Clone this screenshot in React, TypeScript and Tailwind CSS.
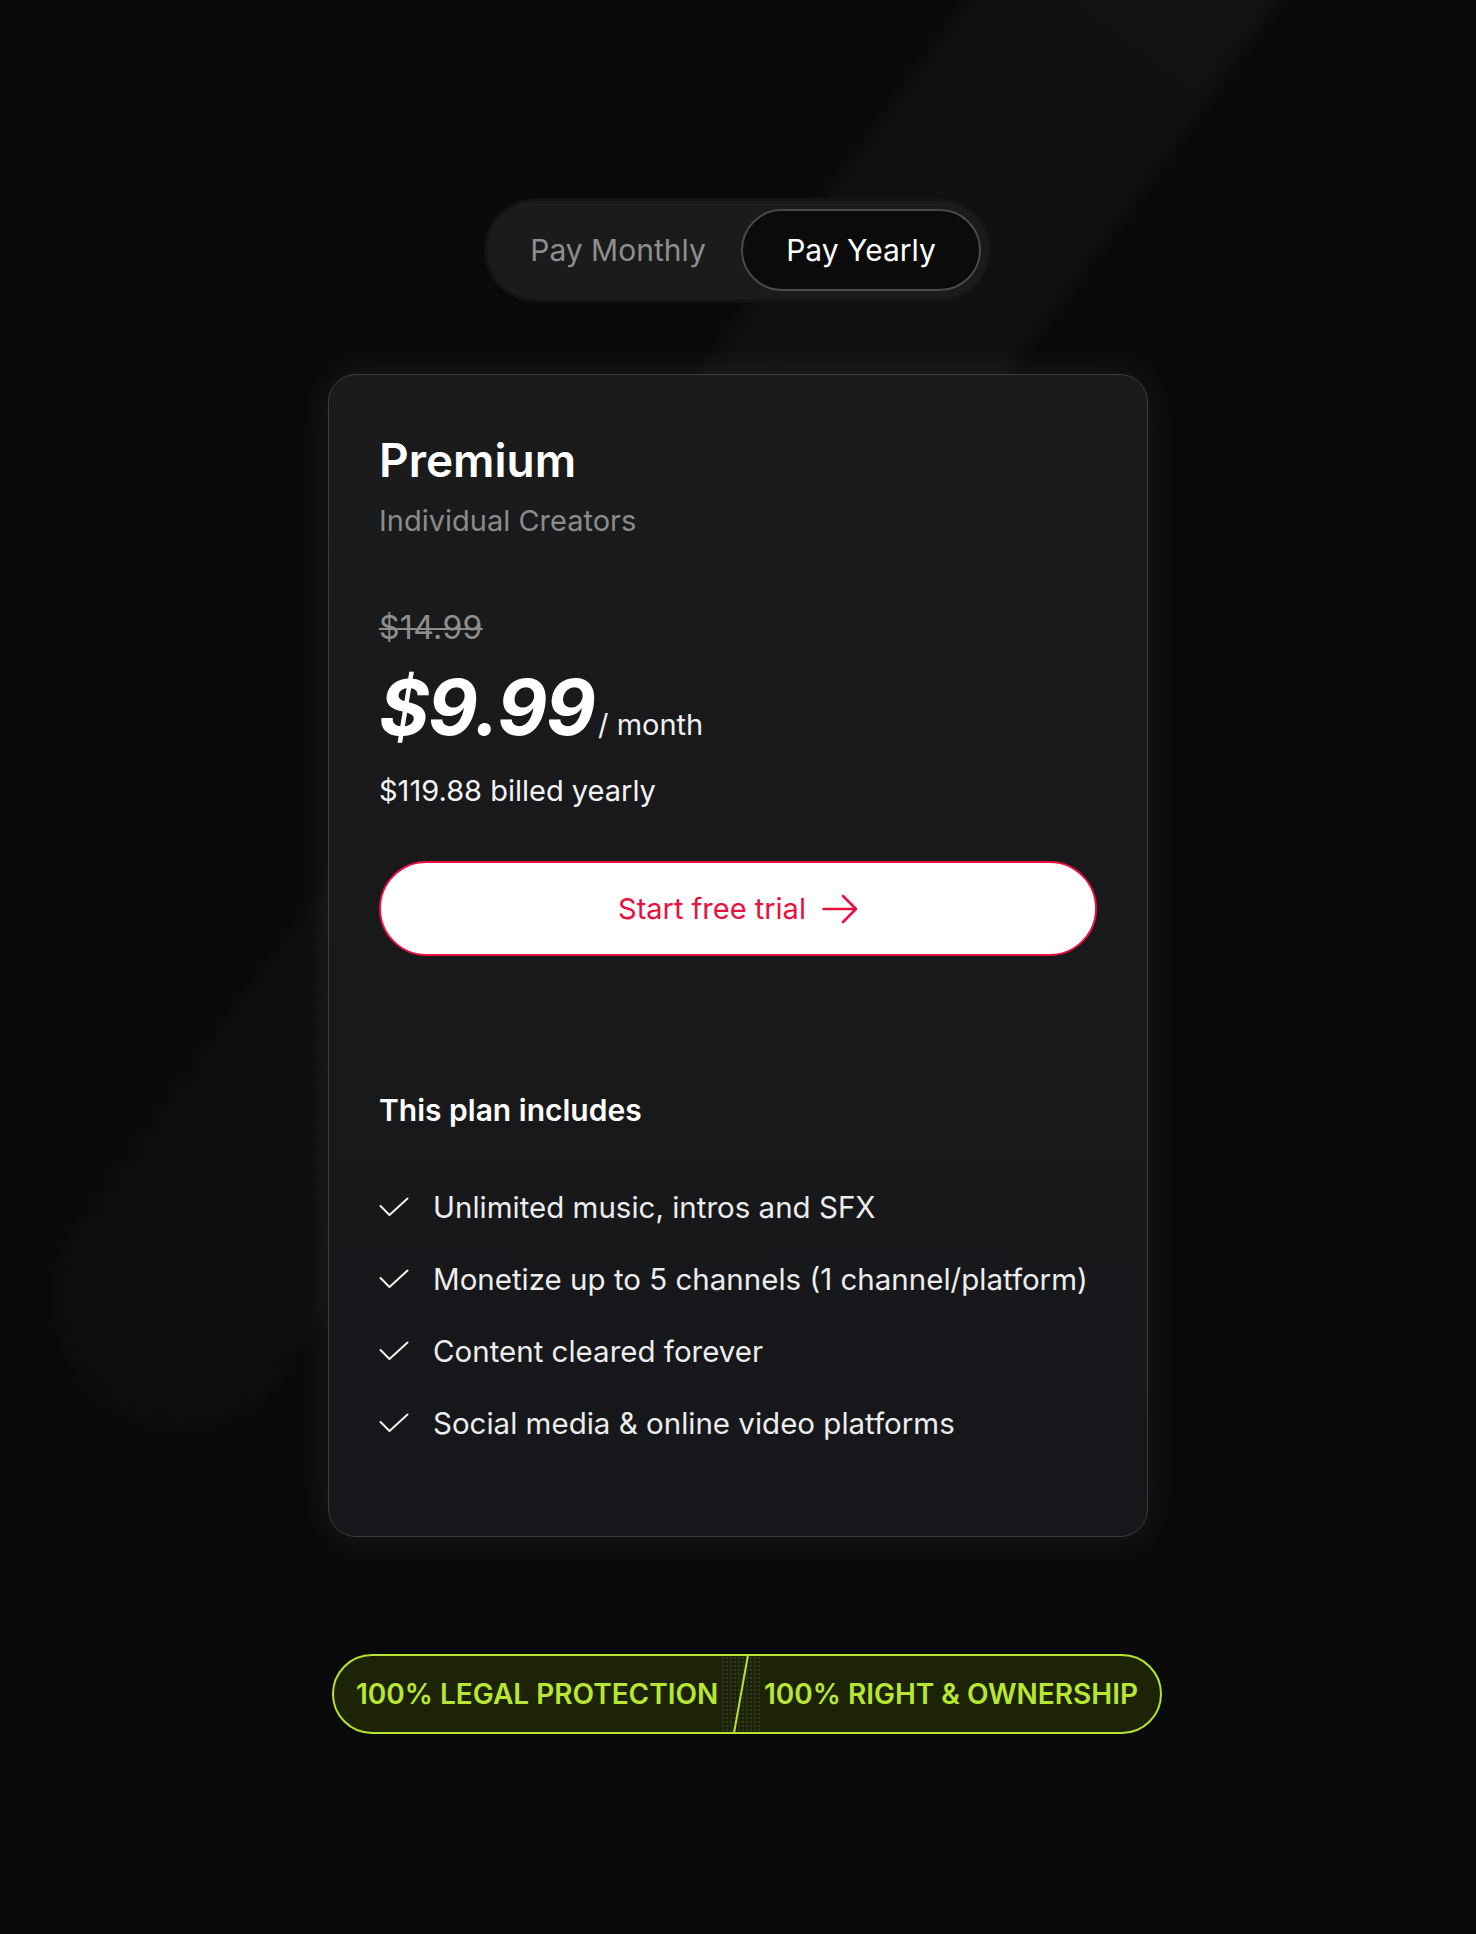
import { useState } from "react";

const FEATURES = [
  "Unlimited music, intros and SFX",
  "Monetize up to 5 channels (1 channel/platform)",
  "Content cleared forever",
  "Social media & online video platforms",
];

function CheckIcon() {
  return (
    <svg width="30" height="20" viewBox="0 0 30 20" fill="none" className="shrink-0">
      <path
        d="M1.5 9L10.5 18L28.5 1.5"
        stroke="#f2f2f2"
        strokeWidth="2"
        strokeLinecap="round"
        strokeLinejoin="round"
      />
    </svg>
  );
}

function ArrowIcon() {
  return (
    <svg width="36" height="30" viewBox="0 0 36 30" fill="none" className="shrink-0">
      <path
        d="M1.5 15H34M21 2L34 15L21 28"
        stroke="#e8103e"
        strokeWidth="2.6"
        strokeLinecap="round"
        strokeLinejoin="round"
      />
    </svg>
  );
}

export default function App() {
  const [yearly, setYearly] = useState(true);

  return (
    <div className="relative min-h-[1934px] w-full overflow-hidden bg-[#0a0a0a] font-['Inter',sans-serif]">
      {/* diagonal streak in the background */}
      <div className="pointer-events-none absolute left-[600px] top-[-500px] h-[2100px] w-[250px] rotate-[36deg] rounded-full bg-linear-to-b from-[#131313] via-[#0f0f0f] to-[#0e0e0e] blur-[6px]" />

      <div className="relative flex flex-col items-center">
        <div className="mt-[201px] flex items-center rounded-full bg-[#1b1b1c] p-2 shadow-[0_0_0_3px_#141414]">
          <button
            onClick={() => setYearly(false)}
            className={
              yearly
                ? "h-[82px] w-[246px] rounded-full text-[30px] text-[#8e8e8e]"
                : "h-[82px] w-[246px] rounded-full border-2 border-[#4a4a4a] bg-[#0b0b0b] text-[30px] text-white"
            }
          >
            Pay Monthly
          </button>
          <button
            onClick={() => setYearly(true)}
            className={
              yearly
                ? "h-[82px] w-[240px] rounded-full border-2 border-[#4a4a4a] bg-[#0b0b0b] text-[30px] text-white"
                : "h-[82px] w-[240px] rounded-full text-[30px] text-[#8e8e8e]"
            }
          >
            Pay Yearly
          </button>
        </div>

        <div className="mt-[75px] w-[820px] rounded-[28px] border border-[#3d3d3d] bg-linear-to-b from-[#1b1b1c] to-[#16171a] px-[50px] pt-[57px] pb-[95px] shadow-[0_0_36px_rgba(255,255,255,0.08)]">
          <h2 className="text-[46px] font-semibold leading-[56px] text-white">Premium</h2>
          <p className="mt-[15px] text-[29px] leading-[36px] text-[#8b8b8b]">Individual Creators</p>

          <p className="mt-[69px] text-[32px] leading-[40px] tracking-[0.01em] text-[#8e8e8e] line-through decoration-2">
            $14.99
          </p>
          <div className="mt-[19px] flex items-baseline">
            <span className="text-[77px] font-bold italic leading-[80px] tracking-[-0.02em] text-white">
              $9.99
            </span>
            <span className="ml-[4px] text-[29px] leading-[36px] text-[#f0f0f0]">/ month</span>
          </div>
          <p className="mt-[26px] text-[29px] leading-[36px] text-[#f4f4f4]">$119.88 billed yearly</p>

          <button className="mt-[52px] flex h-[95px] w-full items-center justify-center gap-[16px] rounded-full border-2 border-[#e8103e] bg-white text-[29px] text-[#e8103e]">
            Start free trial
            <ArrowIcon />
          </button>

          <h3 className="mt-[136px] text-[30px] font-semibold leading-[36px] text-white">This plan includes</h3>

          <ul className="mt-[61px] flex flex-col gap-[36px]">
            {FEATURES.map((f) => (
              <li key={f} className="flex items-center gap-[24px] text-[29.5px] leading-[36px] text-[#ededed]">
                <CheckIcon />
                {f}
              </li>
            ))}
          </ul>
        </div>

        <div className="ml-[18px] mt-[117px] flex h-[80px] w-[830px] items-center justify-between rounded-full border-2 border-[#b6e32f] bg-[#1d2306] px-[22px] text-[28px] font-semibold uppercase text-[#b8e632]">
          <span>100% Legal Protection</span>
          <div className="relative flex h-full w-[40px] items-center justify-center">
            <div className="absolute inset-y-0 left-0 w-[40px] bg-[radial-gradient(#5a5a5a_0.7px,transparent_0.8px)] bg-[length:4px_4px] opacity-40" />
            <svg width="20" height="78" viewBox="0 0 20 78" fill="none" className="relative">
              <path d="M17 0L3 78" stroke="#b6e32f" strokeWidth="2" />
            </svg>
          </div>
          <span>100% Right &amp; Ownership</span>
        </div>
      </div>
    </div>
  );
}
